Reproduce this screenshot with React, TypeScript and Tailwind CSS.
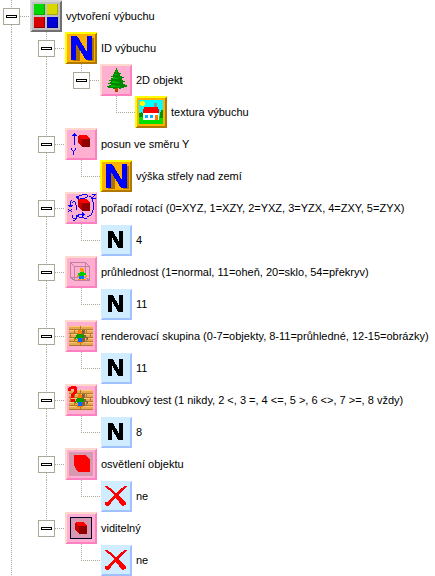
import { useState, type ReactNode } from 'react';

type IconName =
  | 'group' | 'number' | 'tree' | 'texture' | 'moveY' | 'rotate' | 'value'
  | 'glass' | 'bricks' | 'depth' | 'light' | 'visible' | 'no';

type TreeItem = { label: string; icon: IconName; children?: TreeItem[] };

const root: TreeItem = {
  label: 'vytvoření výbuchu',
  icon: 'group',
  children: [
    {
      label: 'ID výbuchu',
      icon: 'number',
      children: [
        { label: '2D objekt', icon: 'tree', children: [{ label: 'textura výbuchu', icon: 'texture' }] },
      ],
    },
    { label: 'posun ve směru Y', icon: 'moveY', children: [{ label: 'výška střely nad zemí', icon: 'number' }] },
    {
      label: 'pořadí rotací (0=XYZ, 1=XZY, 2=YXZ, 3=YZX, 4=ZXY, 5=ZYX)',
      icon: 'rotate',
      children: [{ label: '4', icon: 'value' }],
    },
    {
      label: 'průhlednost (1=normal, 11=oheň, 20=sklo, 54=překryv)',
      icon: 'glass',
      children: [{ label: '11', icon: 'value' }],
    },
    {
      label: 'renderovací skupina (0-7=objekty, 8-11=průhledné, 12-15=obrázky)',
      icon: 'bricks',
      children: [{ label: '11', icon: 'value' }],
    },
    {
      label: 'hloubkový test (1 nikdy, 2 <, 3 =, 4 <=, 5 >, 6 <>, 7 >=, 8 vždy)',
      icon: 'depth',
      children: [{ label: '8', icon: 'value' }],
    },
    { label: 'osvětlení objektu', icon: 'light', children: [{ label: 'ne', icon: 'no' }] },
    { label: 'viditelný', icon: 'visible', children: [{ label: 'ne', icon: 'no' }] },
  ],
};

const frames = {
  gray: { fill: '#c0c0c0', light: '#d4d4d4', dark: '#707070' },
  amber: { fill: '#ffb000', light: '#ffff00', dark: '#b07800' },
  pink: { fill: '#ffb0d0', light: '#ffd8d0', dark: '#ff80c0' },
  blue: { fill: '#d0ecff', light: '#ffffff', dark: '#a0c0ff' },
};

function Frame({ tone, children }: { tone: keyof typeof frames; children: ReactNode }) {
  const c = frames[tone];
  return (
    <svg viewBox="0 0 32 32" shapeRendering="crispEdges" aria-hidden="true" className="size-8 shrink-0">
      <path fill={c.dark} d="M0 0h32v32H0z" />
      <path fill={c.light} d="M0 0h32v1h-1v1h-1v28H2v1H1v1H0z" />
      <path fill={c.dark} d="M2 30h28V2h1V1h1v31H1v-1h1z" />
      <path fill={c.fill} d="M2 2h28v28H2z" />
      {children}
    </svg>
  );
}

function Cube({ x, y }: { x: number; y: number }) {
  return (
    <g transform={`translate(${x} ${y})`}>
      <path fill="#ff0000" d="M1 0h8l3 4H4L0 2z" />
      <path fill="#c80000" d="M0 1l4 3v8L0 8z" />
      <path fill="#900000" d="M4 4h8v8H4z" />
    </g>
  );
}

function Bricks() {
  return (
    <>
      <path fill="#e8a850" d="M4 6h24v20H4z" />
      <path fill="#ffc870" d="M4 6h24v1H4zM4 10h24v1H4zM4 14h24v1H4zM4 18h24v1H4zM4 22h24v1H4z" />
      <path
        fill="#b07830"
        d="M4 9h24v1H4zM4 13h24v1H4zM4 17h24v1H4zM4 21h24v1H4zM4 25h24v1H4zM15 6h1v3h-1zM9 10h1v3H9zM21 10h1v3h-1zM5 14h1v3H5zM25 14h1v3h-1zM9 18h1v3H9zM21 18h1v3h-1zM15 22h1v3h-1z"
      />
      <path fill="#806040" d="M17 10h3v3h-1v2h2v2h2v3h-1v-2h-2v4h-3v-7h-1v-2h1z" />
      <path fill="#ff7800" d="M13 10h3v1h1v3h-4zM10 19h2v1h-2zM12 22h6v1h-6z" />
      <path fill="#00a000" d="M12 14h5v1h2v3h-2v1h-5v-1h-1v1h-1v-2h1v-2h1z" />
      <path fill="#0068ff" d="M13 18h4v4h-4z" />
    </>
  );
}

const drawings: Record<IconName, ReactNode> = {
  group: (
    <Frame tone="gray">
      <path fill="#00d800" d="M4 4h11v11H4z" />
      <path fill="#d8d800" d="M17 4h11v11H17z" />
      <path fill="#d80000" d="M4 17h11v11H4z" />
      <path fill="#0000d8" d="M17 17h11v11H17z" />
      <path fill="#00a800" d="M4 14h10V4h1v11H4z" />
      <path fill="#a8a800" d="M17 14h10V4h1v11H17z" />
      <path fill="#900000" d="M4 27h10V17h1v11H4z" />
      <path fill="#000090" d="M17 27h10V17h1v11H17z" />
    </Frame>
  ),
  number: (
    <Frame tone="amber">
      <path fill="#a87000" d="M8 6h6l8 15V6h7v23h-6l-8-15v15H8z" />
      <path fill="#0000ff" d="M6 4h6l10 16V4h5v24h-6L11 12v16H6z" />
    </Frame>
  ),
  tree: (
    <Frame tone="pink">
      <path fill="#b04800" d="M15 23h3v5h-3z" />
      <path
        fill="#008800"
        d="M16 4h1v2h1v2h1v1h2v1h-1v2h2v1h2v1h-2v2h1v1h2v1h-2v2h2v1h2v2h-3v1h-3v1h-2v-1h-4v1h-2v-1H8v-1H7v-1h2v-1h2v-1H8v-1h2v-1h1v-1H9v-1h2v-2h2v-1h-2v-1h2v-2h1V8h1V6h1z"
      />
      <path fill="#00b800" d="M16 6h1v3h-1zM14 10h3v1h-3zM13 13h2v1h3v1h-5zM12 17h4v1h3v1h-7zM11 21h4v1h5v1h-9z" />
    </Frame>
  ),
  texture: (
    <Frame tone="amber">
      <path fill="#00ffff" d="M4 4h24v24H4z" />
      <path fill="#00e000" d="M4 20h24v8H4z" />
      <path fill="#009000" d="M4 17h2v-1h1v1h2v4H4zM25 16h1v-2h2v8h-3z" />
      <path fill="#ffff00" d="M6 5h3v1h1v3H9v1H6V9H5V6h1z" />
      <path fill="#909090" d="M19 7h3v5h-3z" />
      <path fill="#ff0000" d="M9 11h14v2h1v4H8v-4h1z" />
      <path fill="#ffffff" d="M8 17h16v7H8z" />
      <path fill="#00b0ff" d="M10 19h3v3h-3zM15 19h3v3h-3z" />
      <path fill="#ff7800" d="M20 19h3v5h-3z" />
    </Frame>
  ),
  moveY: (
    <Frame tone="pink">
      <Cube x={13} y={7} />
      <path
        fill="#0000ff"
        d="M9 5h1v12H9zM8 6h3v1H8zM7 7h5v1H7zM6 20h1v2H6zM10 20h1v2h-1zM7 22h1v1H7zM9 22h1v1H9zM8 23h1v4H8z"
      />
    </Frame>
  ),
  rotate: (
    <Frame tone="pink">
      <Cube x={13} y={7} />
      <path
        fill="#0000ff"
        d="M3 17h1v1H3zM6 17h1v1H6zM4 18h2v1H4zM3 19h1v1H3zM6 19h1v1H6zM3 13h5v1H3zM4 14h3v1H4zM5 9h1v6H5zM6 8h1v1H6zM7 10h1v1H7zM8 9h2v1H8zM10 10h1v3h-1zM11 13h1v5h-1zM27 2h4v1h-1v1h-1v1h-1v1h3v1h-4V5h1V4h1V3h-2zM7 23h1v3H7zM11 23h1v4h-1zM8 26h3v1H8zM10 27h1v1h-1zM8 28h2v1H8zM11 4h3v4h-1V7h-1V6h-1zM14 3h3v1h-3zM17 2h5v1h-5zM22 3h1v2h-1zM20 5h2v1h-2zM15 6h5v1h-5zM24 4h2v1h-2zM26 5h1v2h-1zM27 7h1v3h-1zM28 10h1v8h-1zM27 18h1v3h-1zM26 21h1v2h-1zM24 23h2v1h-2zM22 24h2v1h-2zM19 26h3v1h-3zM14 25h5v1h-5zM12 23h2v2h-2zM13 22h6v1h-6zM17 20h1v5h-1zM18 21h1v3h-1zM19 22h1v1h-1z"
      />
    </Frame>
  ),
  value: (
    <Frame tone="blue">
      <path fill="#d0ecff" d="M1 1h29v29H1z" />
      <path fill="#000000" d="M8 7h5l6 11V7h4v17h-5l-6-11v11H8z" />
    </Frame>
  ),
  glass: (
    <Frame tone="pink">
      <path
        fill="none"
        stroke="#c080a0"
        d="M5.500 6.500h15v15h-15zM9.500 10.500h15v14h-15zM5.500 6.500l4 4M20.500 6.500l4 4M5.500 21.500l4 3M20.500 21.500l4 3"
      />
      <path fill="#ff9800" d="M15 12h3v1h1v3h-3v-1h-1zM12 19h2v2h-2zM20 19h2v2h-2zM13 23h3v1h-3zM17 23h4v1h-4z" />
      <path fill="#00c800" d="M15 16h4v1h2v2h-2v1h-5v-1h-1v-2h2z" />
      <path fill="#0078ff" d="M14 20h5v3h-5z" />
    </Frame>
  ),
  bricks: (
    <Frame tone="pink">
      <Bricks />
    </Frame>
  ),
  depth: (
    <Frame tone="pink">
      <Bricks />
      <path fill="#ff0000" d="M4 3h2V2h5v1h1v6h-1v1h-1v1H9v3H6v-4h1V9h1V8h1V5H6v2H3V4h1zM6 15h4v3H6z" />
    </Frame>
  ),
  light: (
    <Frame tone="pink">
      <path fill="#d898b0" d="M4 4h24v24H4z" />
      <path fill="#ff0000" d="M9 7h12v1h1v1h1v1h1v1h1v13H13v-1h-1v-1h-1v-2h-1v-2H9z" />
    </Frame>
  ),
  visible: (
    <Frame tone="pink">
      <path fill="#000030" d="M5 5h22v22H5z" />
      <path fill="#d898b0" d="M6 6h20v20H6z" />
      <Cube x={10} y={10} />
    </Frame>
  ),
  no: (
    <Frame tone="blue">
      <path fill="#d0ecff" d="M1 1h29v29H1z" />
      <path
        fill="#ff0000"
        d="M5 6h2l3 2 6 5 6-5 3-2h2v1l-4 3-5 5 4 4 4 3v3h-2v1h-2l-3-4-4-4-4 5-3 3H6v-1H5v-3h2l3-3 4-4-5-5-4-3z"
      />
    </Frame>
  ),
};

const dotsDown = 'bg-[linear-gradient(#aca899_50%,transparent_50%)] bg-[length:1px_2px]';
const dotsAcross = 'bg-[linear-gradient(90deg,#aca899_50%,transparent_50%)] bg-[length:2px_1px]';

function Guide({ on }: { on: boolean }) {
  return <span className="flex w-[35px] shrink-0 pl-4">{on && <span className={`w-px ${dotsDown}`} />}</span>;
}

function Branch({ item, more, trail }: { item: TreeItem; more: boolean; trail: boolean[] }) {
  const [open, setOpen] = useState(true);
  const children = item.children ?? [];
  return (
    <li>
      <div className="flex h-8">
        {trail.map((on, i) => (
          <Guide key={i} on={on} />
        ))}
        {children.length > 0 ? (
          <span className="flex w-[35px] shrink-0 pl-2">
            <span className="flex w-[17px] flex-col items-center">
              <span className={`h-2 w-px ${dotsDown}`} />
              <button
                type="button"
                aria-label={`${open ? 'Sbalit' : 'Rozbalit'} ${item.label}`}
                aria-expanded={open}
                onClick={() => setOpen(!open)}
                className="flex size-[17px] shrink-0 items-center justify-center border border-[#aca899] bg-white"
              >
                <span className={`w-[11px] border border-black ${open ? 'h-[3px]' : 'h-[11px]'}`} />
              </button>
              {more && <span className={`w-px grow ${dotsDown}`} />}
            </span>
            <span className={`mt-4 h-px grow ${dotsAcross}`} />
          </span>
        ) : (
          <span className="flex w-[35px] shrink-0 pl-4">
            <span className={`h-4 w-px ${dotsDown}`} />
            <span className={`-ml-px mt-4 h-px grow ${dotsAcross}`} />
          </span>
        )}
        {drawings[item.icon]}
        <span className="self-center whitespace-nowrap pl-1">{item.label}</span>
      </div>
      {open && children.length > 0 && (
        <ul>
          {children.map((child, i) => (
            <Branch key={child.label} item={child} more={i < children.length - 1} trail={[...trail, more]} />
          ))}
        </ul>
      )}
    </li>
  );
}

export default function App() {
  return (
    <main className="min-h-screen overflow-hidden bg-white font-['Liberation_Sans',Arial,sans-serif] text-[11px] leading-4 text-black">
      <ul className="-ml-[5px]">
        <Branch item={root} more trail={[]} />
      </ul>
    </main>
  );
}
